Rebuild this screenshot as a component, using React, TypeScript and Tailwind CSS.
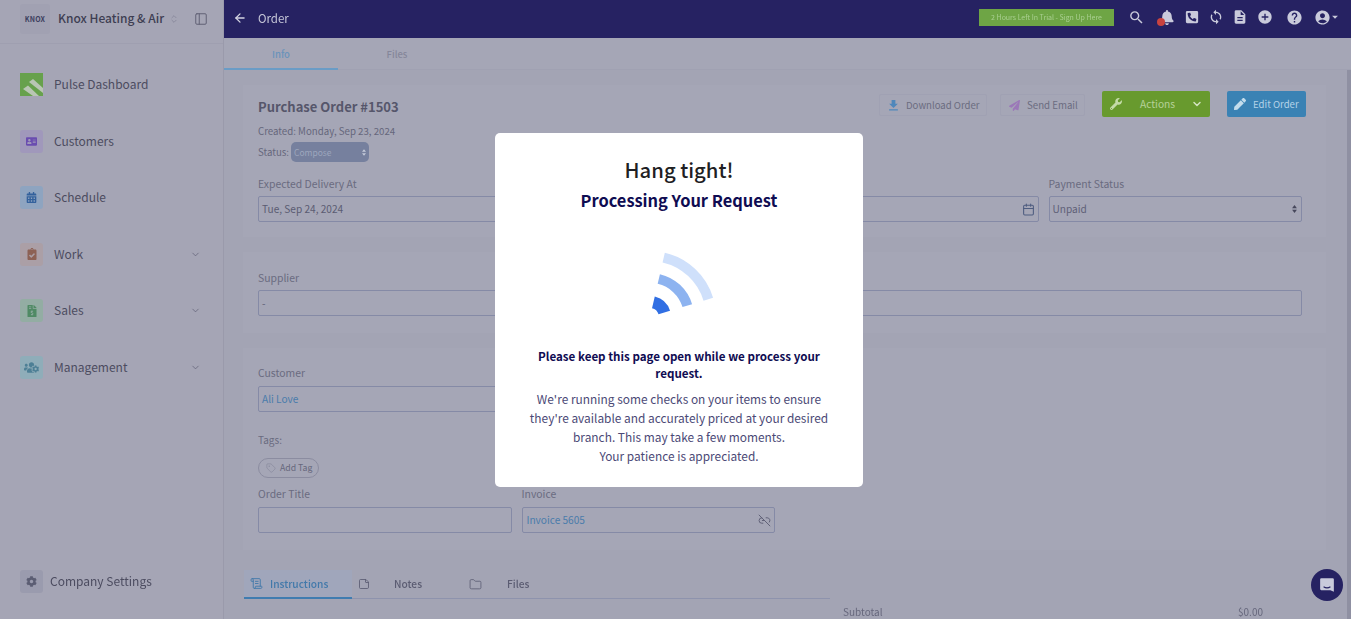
import React from "react";
import { ArrowLeft, ChevronDown, ChevronsUpDown, PanelLeft, Tag, Link2Off, ScrollText, StickyNote, Folder, Calendar } from "lucide-react";
import { FaBell, FaPhoneSquareAlt, FaWrench, FaPen, FaPaperPlane, FaCog, FaCalendarAlt, FaClipboardCheck, FaFileInvoiceDollar, FaUsersCog, FaAddressCard } from "react-icons/fa";
import { MdSearch, MdSync, MdDescription, MdAddCircle, MdHelp, MdAccountCircle, MdArrowDropDown, MdDownload } from "react-icons/md";

function PulseLogo() {
  return (
    <svg viewBox="0 0 23 23" className="w-[23px] h-[23px]">
      <rect width="23" height="23" fill="#67a14c" />
      <path d="M3 16 L8 12.5 L19 23 L13 23Z" fill="#b9c6b4" />
      <path d="M9 9 L13 6 L23 15 L23 20Z" fill="#b9c6b4" />
    </svg>
  );
}

function UpDown({ className }: { className: string }) {
  return (
    <svg viewBox="0 0 6 10" className={className} fill="currentColor">
      <path d="M3 0 L6 4 L0 4Z" />
      <path d="M3 10 L6 6 L0 6Z" />
    </svg>
  );
}

function NavItem({ icon, box, label, chevron }: { icon: React.ReactNode; box: string; label: string; chevron?: boolean }) {
  return (
    <div className="flex items-center h-[23px]">
      <div className={`w-[23px] h-[23px] rounded-[3px] flex items-center justify-center ${box}`}>{icon}</div>
      <span className="ml-[11px] mb-[1px] text-[12px] leading-[18px] text-[#4c4c60]">{label}</span>
      {chevron && <ChevronDown className="ml-auto mr-[22px] w-[11px] h-[11px] text-[#5c5c72]" strokeWidth={1.5} />}
    </div>
  );
}

function Sidebar() {
  return (
    <aside className="w-[224px] shrink-0 h-full bg-[#a5a5b5] border-r border-[#9a9aab] flex flex-col">
      <div className="h-[44px] shrink-0 border-b border-[#9f9fb0] flex items-center pl-[20px] pb-[8px] pt-[3px]">
        <div className="w-[30px] h-[30px] bg-[#a1a1b2] rounded-[3px] flex items-center justify-center">
          <span className="text-[7px] leading-[8px] font-bold tracking-[0.2px] text-[#3d4060]">KNOX</span>
        </div>
        <span className="ml-[8px] mb-[2px] text-[12px] leading-[18px] font-medium text-[#3e3e52] whitespace-nowrap">Knox Heating &amp; Air</span>
        <ChevronsUpDown className="ml-[5px] w-[10px] h-[12px] text-[#7c7c90]" strokeWidth={1.5} />
        <PanelLeft className="ml-[15px] w-[14px] h-[14px] text-[#606074]" strokeWidth={1.7} />
      </div>
      <nav className="pt-[29px] pl-[20px] flex flex-col gap-[33.5px]">
        <NavItem box="" icon={<PulseLogo />} label="Pulse Dashboard" />
        <NavItem box="bg-[#a098bb]" icon={<FaAddressCard className="w-[11px] h-[11px] text-[#6a4cb0]" />} label="Customers" />
        <NavItem box="bg-[#8ea4c0]" icon={<FaCalendarAlt className="w-[11px] h-[11px] text-[#33619c]" />} label="Schedule" />
        <NavItem box="bg-[#ab9fa6]" icon={<FaClipboardCheck className="w-[10px] h-[12px] text-[#8d6154]" />} label="Work" chevron />
        <NavItem box="bg-[#93ada3]" icon={<FaFileInvoiceDollar className="w-[10px] h-[12px] text-[#4f8a64]" />} label="Sales" chevron />
        <NavItem box="bg-[#8fadb9]" icon={<FaUsersCog className="w-[15px] h-[13px] text-[#4d7f95]" />} label="Management" chevron />
      </nav>
      <div className="mt-auto mb-[26px] ml-[20px] flex items-center h-[23px]">
        <div className="w-[23px] h-[23px] rounded-[3px] bg-[#9a9bae] flex items-center justify-center">
          <FaCog className="w-[11px] h-[11px] text-[#5b5d73]" />
        </div>
        <span className="ml-[7px] mb-[2px] text-[12px] leading-[18px] text-[#4c4c60]">Company Settings</span>
      </div>
    </aside>
  );
}

function TopBar() {
  const ic = "text-[#c9cadb]";
  return (
    <header className="h-[38px] shrink-0 bg-[#262262] flex items-center pl-[9px] pr-[9px] pb-[4px]">
      <ArrowLeft className="mt-[2px] w-[14px] h-[14px] text-[#d3d4e2]" strokeWidth={2.2} />
      <span className="mt-[2px] ml-[11px] text-[11.5px] leading-[16px] text-[#c6c7d8]">Order</span>
      <div className="ml-auto w-[135px] h-[17px] bg-[#6ea545] flex items-center justify-center text-[7px] leading-[9px] text-[#a9cf90] whitespace-nowrap">
        2 Hours Left In Trial - Sign Up Here
      </div>
      <MdSearch className={`ml-[14px] w-[17px] h-[17px] ${ic}`} />
      <div className="relative ml-[15px]">
        <FaBell className={`w-[14px] h-[15px] ${ic}`} />
        <span className="absolute -left-[3px] top-[8px] w-[8px] h-[8px] rounded-full bg-[#c9433f]" />
      </div>
      <FaPhoneSquareAlt className={`ml-[11px] w-[14px] h-[14px] ${ic}`} />
      <MdSync className={`ml-[9px] w-[16px] h-[16px] ${ic}`} />
      <MdDescription className={`ml-[8px] w-[16px] h-[16px] ${ic}`} />
      <MdAddCircle className={`ml-[9px] w-[16px] h-[16px] ${ic}`} />
      <MdHelp className={`ml-[13px] w-[17px] h-[17px] ${ic}`} />
      <MdAccountCircle className={`ml-[11px] w-[17px] h-[17px] ${ic}`} />
      <MdArrowDropDown className={`-ml-[3px] w-[14px] h-[14px] ${ic}`} />
    </header>
  );
}

function Field({ label, low, children }: { label: string; low?: boolean; children?: React.ReactNode }) {
  return (
    <div>
      <div className={`text-[10.4px] leading-[14px] text-[#6a6b80] ${low ? "pt-[1px] mb-[5px]" : "mb-[6px]"}`}>{label}</div>
      <div className="h-[26px] border border-[#858aa6] rounded-[2px] flex items-center px-[3px] text-[10.1px] leading-[14px] text-[#5f6076]">
        {children}
      </div>
    </div>
  );
}

const card = "shrink-0 bg-[#a5a6b6] pl-[15px] pr-[24px]";

function CardOne() {
  return (
    <section className={`h-[152px] pt-[6px] ${card}`}>
      <div className="flex justify-between h-[85px]">
        <div className="pt-[6px]">
          <h1 className="text-[13px] leading-[19px] font-bold text-[#56566b]">Purchase Order #1503</h1>
          <div className="mt-[8px] text-[9.7px] leading-[14px] text-[#66677c]">Created: Monday, Sep 23, 2024</div>
          <div className="mt-[4px] flex items-center text-[9.7px] leading-[14px] text-[#66677c]">
            Status:
            <span className="ml-[2px] w-[78px] h-[20px] rounded-[5px] bg-[#76809e] text-[#9da6bd] text-[8.5px] flex items-center justify-between px-[3px]">
              Compose
              <UpDown className="w-[4px] h-[7px] text-[#c5cad9]" />
            </span>
          </div>
        </div>
        <div className="flex items-start -mr-[4px]">
          <div className="mt-[3px] w-[108px] h-[22px] border border-[#a0a1b3] rounded-[2px] flex items-center pl-[6px] text-[9.6px] text-[#6b6c80]">
            <MdDownload className="w-[15px] h-[15px] text-[#4f87bb]" />
            <span className="ml-[5px]">Download Order</span>
          </div>
          <div className="ml-[13px] mt-[3px] w-[85px] h-[22px] border border-[#a0a1b3] rounded-[2px] flex items-center pl-[8px] text-[9.7px] text-[#6b6c80]">
            <FaPaperPlane className="w-[11px] h-[11px] text-[#9b78b8]" />
            <span className="ml-[7px]">Send Email</span>
          </div>
          <div className="ml-[17px] w-[108px] h-[26px] rounded-[2px] bg-[#689a2e] flex items-center pl-[8px] pr-[7px] text-[10.2px] text-[#b6d199]">
            <FaWrench className="w-[12px] h-[12px] text-[#c4dba8]" />
            <span className="ml-[18px]">Actions</span>
            <ChevronDown className="ml-auto w-[12px] h-[12px] text-[#d3e3c0]" strokeWidth={3} />
          </div>
          <div className="ml-[17px] w-[79px] h-[26px] rounded-[2px] bg-[#3a82b4] flex items-center pl-[7px] text-[9.6px] text-[#b4d3e8]">
            <FaPen className="w-[12px] h-[12px] text-[#c3dcec]" />
            <span className="ml-[7px]">Edit Order</span>
          </div>
        </div>
      </div>
      <div className="grid grid-cols-4 gap-[10px]">
        <Field low label="Expected Delivery At"><span className="text-[#5b5c72]">Tue, Sep 24, 2024</span></Field>
        <Field low label="Delivered At" />
        <Field low label="Due Date">
          <Calendar className="ml-auto w-[13px] h-[13px] text-[#4f5d80]" strokeWidth={2} />
        </Field>
        <Field low label="Payment Status">
          Unpaid
          <UpDown className="ml-auto mr-[1px] w-[5px] h-[8px] text-[#46475c]" />
        </Field>
      </div>
    </section>
  );
}

function CardTwo() {
  return (
    <section className={`h-[81px] pt-[18px] ${card}`}>
      <Field low label="Supplier">-</Field>
    </section>
  );
}

function CardThree() {
  return (
    <section className={`h-[202px] pt-[18px] ${card}`}>
      <div className="grid grid-cols-4 gap-[10px]">
        <Field label="Customer"><span className="text-[#4a7cab]">Ali Love</span></Field>
      </div>
      <div className="mt-[21px] text-[10px] leading-[14px] text-[#6a6b80]">Tags:</div>
      <div className="mt-[11px] w-[61px] h-[20px] border border-[#8b8ca0] rounded-full flex items-center pl-[7px] text-[8.7px] text-[#66677c]">
        <Tag className="w-[10px] h-[10px] text-[#85869a]" strokeWidth={1.5} />
        <span className="ml-[4px]">Add Tag</span>
      </div>
      <div className="mt-[9px] grid grid-cols-4 gap-[10px]">
        <Field label="Order Title" />
        <Field label="Invoice">
          <span className="ml-[1px] text-[#4a7cab]">Invoice 5605</span>
          <Link2Off className="ml-auto w-[13px] h-[13px] text-[#5f6076]" strokeWidth={1.8} />
        </Field>
      </div>
    </section>
  );
}

function BottomTabs() {
  return (
    <div className="mt-[20px] ml-[1px] shrink-0 flex items-start">
      <div className="w-[586px] shrink-0 h-[29px] border-b border-[#8e93ad] flex text-[10.2px] font-medium">
        <div className="w-[108px] h-[29px] bg-[#a0a6bb] border-b-2 border-[#3f7cb0] flex items-center pl-[6px] text-[#4279aa]">
          <ScrollText className="w-[13px] h-[13px]" strokeWidth={1.7} />
          <span className="ml-[7px]">Instructions</span>
        </div>
        <div className="w-[117px] flex items-center pl-[6px] text-[#5b5c72]">
          <StickyNote className="w-[12px] h-[12px]" strokeWidth={1.7} />
          <span className="ml-[24px]">Notes</span>
        </div>
        <div className="flex items-center text-[#5b5c72]">
          <Folder className="w-[13px] h-[13px]" strokeWidth={1.5} />
          <span className="ml-[25px]">Files</span>
        </div>
      </div>
      <div className="ml-[13px] mt-[35px] w-[420px] flex justify-between text-[10px] leading-[14px] text-[#66677c]">
        <span>Subtotal</span><span>$0.00</span>
      </div>
    </div>
  );
}

function Spinner() {
  return (
    <svg viewBox="0 0 78 80" className="w-[78px] h-[80px] -ml-[1px]" fill="none">
      <path d="M23.7 10.6 A61 61 0 0 1 68.3 52.2" stroke="#cfe0fb" strokeWidth="10" />
      <path d="M18.8 32 A39 39 0 0 1 47.3 58.6" stroke="#8db3f0" strokeWidth="10" />
      <path d="M13.4 55.4 A15 15 0 0 1 24.3 65.6" stroke="#316fe3" strokeWidth="12" />
    </svg>
  );
}

function Modal() {
  return (
    <div className="absolute inset-0 flex items-start justify-center pt-[133px]">
      <div className="w-[368px] h-[354px] ml-[7px] bg-white rounded-[5px] flex flex-col items-center text-center pt-[22px]">
        <h2 className="text-[20.3px] leading-[28px] font-medium text-[#1f1f24]">Hang tight!</h2>
        <h3 className="mt-[5px] text-[16.4px] leading-[24px] font-semibold text-[#0f0c52]">Processing Your Request</h3>
        <div className="mt-[35px]"><Spinner /></div>
        <p className="mt-[21px] w-[300px] text-[11.6px] leading-[17px] font-semibold text-[#0f0c52]">
          Please keep this page open while we process your request.
        </p>
        <p className="mt-[7px] w-[305px] text-[11.9px] leading-[19px] text-[#4b4976]">
          We're running some checks on your items to ensure they're available and accurately priced at your desired branch. This may take a few moments.
          <br />Your patience is appreciated.
        </p>
      </div>
    </div>
  );
}

export default function App() {
  return (
    <div className="relative w-[1351px] h-[619px] overflow-hidden bg-[#a3a4b4] font-['Noto_Sans_CJK_SC','Noto_Sans',sans-serif]">
      <div className="flex h-full blur-[0.5px]">
        <Sidebar />
        <main className="flex-1 min-w-0 h-full flex flex-col">
          <TopBar />
          <div className="h-[32px] shrink-0 flex border-b border-[#a0a1b2] bg-[#a5a6b6]">
            <div className="w-[114px] h-[32px] border-b-2 border-[#6a9cc6] text-center text-[9.5px] leading-[33px] font-medium text-[#6a93bb]">Info</div>
            <div className="w-[118px] text-center text-[9.5px] leading-[33px] font-medium text-[#85869a]">Files</div>
          </div>
          <div className="flex-1 min-h-0 flex overflow-hidden">
            <div className="flex-1 min-w-0 pt-[15px] pl-[19px] pr-[21px] flex flex-col gap-[15px]">
              <CardOne />
              <CardTwo />
              <CardThree />
              <div className="-mt-[15px]"><BottomTabs /></div>
            </div>
            <div className="w-[4px] shrink-0 bg-[#8f90a2]" />
          </div>
        </main>
      </div>
      <Modal />
      <div className="absolute right-[8px] bottom-[18px] w-[32px] h-[32px] rounded-full bg-[#262262] flex items-center justify-center">
        <svg viewBox="0 0 14 14" className="w-[16px] h-[16px]">
          <path d="M2 1h10a1 1 0 0 1 1 1v11l-3-1.5H2a1 1 0 0 1-1-1V2a1 1 0 0 1 1-1z" fill="#c9cadb" />
          <path d="M4 8.5c2 1.3 4 1.3 6 0" stroke="#262262" strokeWidth="1" fill="none" />
        </svg>
      </div>
    </div>
  );
}
